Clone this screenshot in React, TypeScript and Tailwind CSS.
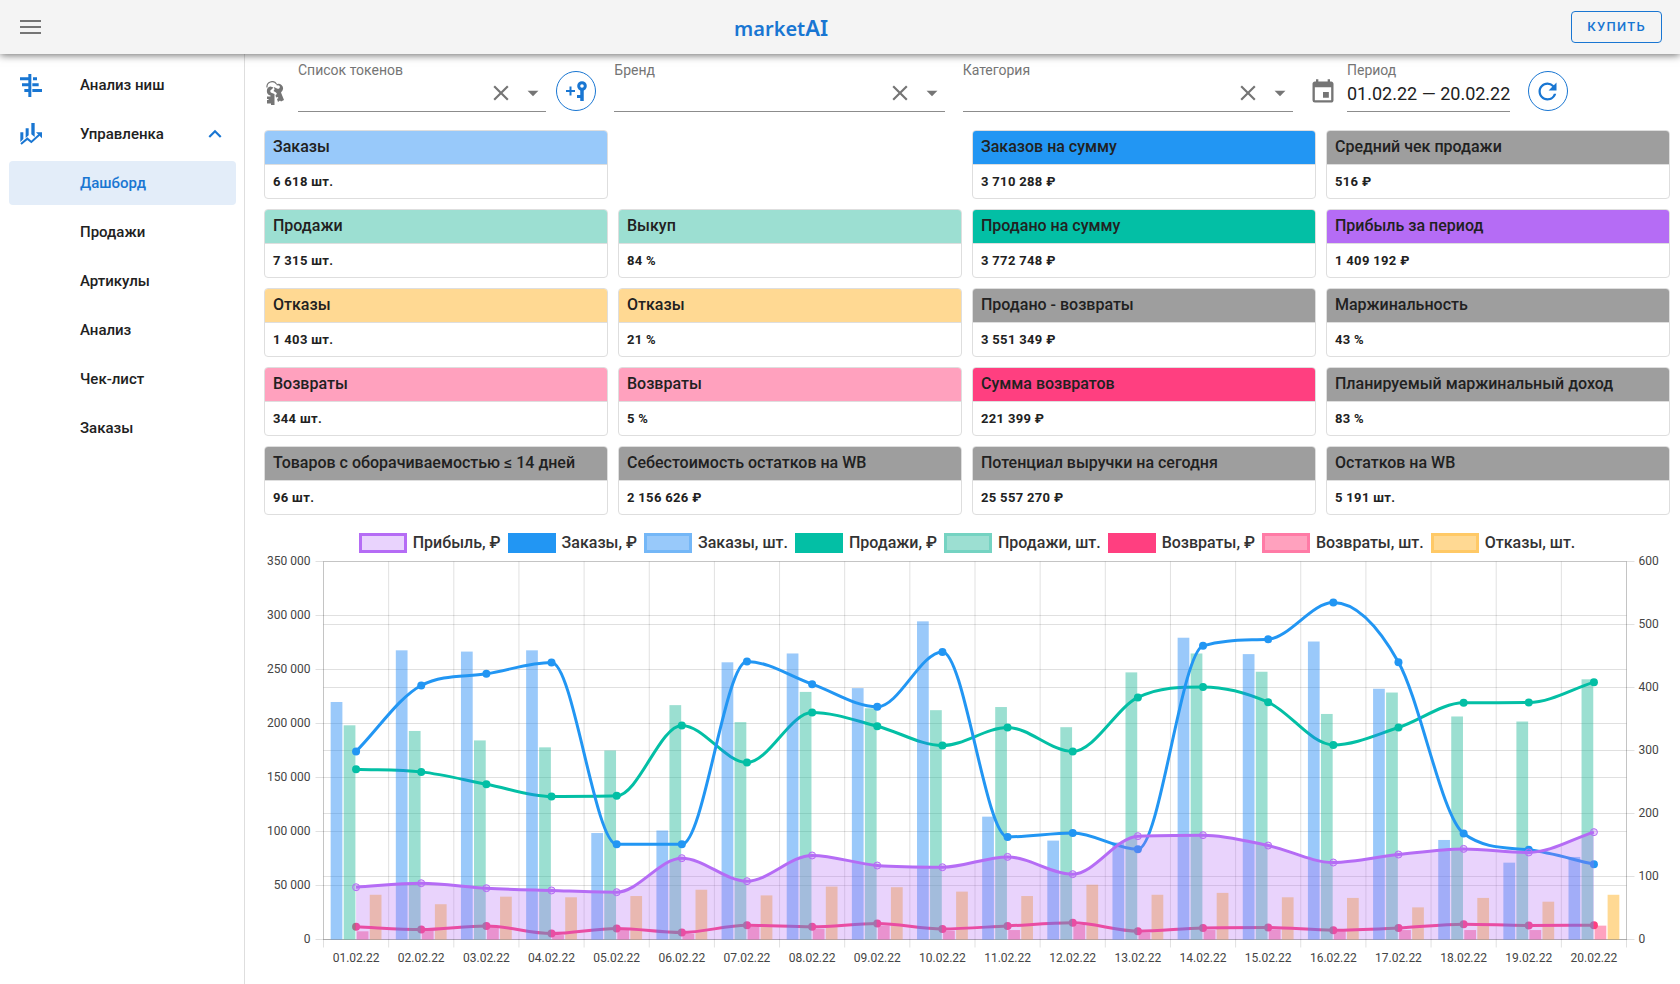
import { useId } from "react";
import { MdArrowDropDown, MdClose, MdEvent, MdExpandLess, MdRefresh } from "react-icons/md";

type Card = { title: string; value: string; color: string } | null;

const cards: Card[] = [
  { title: "Заказы", value: "6 618 шт.", color: "bg-[#98c9fa]" },
  null,
  { title: "Заказов на сумму", value: "3 710 288 ₽", color: "bg-[#2296f3]" },
  { title: "Средний чек продажи", value: "516 ₽", color: "bg-[#9e9e9e]" },
  { title: "Продажи", value: "7 315 шт.", color: "bg-[#9cdfd2]" },
  { title: "Выкуп", value: "84 %", color: "bg-[#9cdfd2]" },
  { title: "Продано на сумму", value: "3 772 748 ₽", color: "bg-[#03bfa5]" },
  { title: "Прибыль за период", value: "1 409 192 ₽", color: "bg-[#b56cf5]" },
  { title: "Отказы", value: "1 403 шт.", color: "bg-[#ffd993]" },
  { title: "Отказы", value: "21 %", color: "bg-[#ffd993]" },
  { title: "Продано - возвраты", value: "3 551 349 ₽", color: "bg-[#9e9e9e]" },
  { title: "Маржинальность", value: "43 %", color: "bg-[#9e9e9e]" },
  { title: "Возвраты", value: "344 шт.", color: "bg-[#ffa1be]" },
  { title: "Возвраты", value: "5 %", color: "bg-[#ffa1be]" },
  { title: "Сумма возвратов", value: "221 399 ₽", color: "bg-[#ff3f80]" },
  { title: "Планируемый маржинальный доход", value: "83 %", color: "bg-[#9e9e9e]" },
  { title: "Товаров с оборачиваемостью ≤ 14 дней", value: "96 шт.", color: "bg-[#9e9e9e]" },
  { title: "Себестоимость остатков на WB", value: "2 156 626 ₽", color: "bg-[#9e9e9e]" },
  { title: "Потенциал выручки на сегодня", value: "25 557 270 ₽", color: "bg-[#9e9e9e]" },
  { title: "Остатков на WB", value: "5 191 шт.", color: "bg-[#9e9e9e]" },
];

const legend = [
  { text: "Прибыль, ₽", box: "bg-[#e9d3fd] border-[#b56cf5]" },
  { text: "Заказы, ₽", box: "bg-[#2296f3] border-[#2296f3]" },
  { text: "Заказы, шт.", box: "bg-[#98c9fa] border-[#74b7f7]" },
  { text: "Продажи, ₽", box: "bg-[#03bfa5] border-[#03bfa5]" },
  { text: "Продажи, шт.", box: "bg-[#9cdfd2] border-[#75d3c2]" },
  { text: "Возвраты, ₽", box: "bg-[#ff3f80] border-[#ff3f80]" },
  { text: "Возвраты, шт.", box: "bg-[#ffa1be] border-[#ff7ba6]" },
  { text: "Отказы, шт.", box: "bg-[#ffd993] border-[#ffc966]" },
];

const subItems = ["Дашборд", "Продажи", "Артикулы", "Анализ", "Чек-лист", "Заказы"];

// money series, left axis
const profit = [48400, 52100, 47500, 45400, 43800, 75300, 54000, 77800, 68500, 66900, 76500, 60500, 95700, 96600, 87000, 71300, 78700, 83900, 80600, 99400];
const ordersSum = [174100, 235200, 246000, 256500, 88200, 88200, 257400, 236400, 215400, 266300, 95000, 98700, 83600, 271900, 278100, 312000, 256800, 98100, 83000, 69700];
const salesSum = [157700, 155200, 143800, 132400, 133000, 198200, 163900, 210200, 197500, 179600, 196300, 174100, 224100, 233900, 219700, 180200, 196300, 219100, 219400, 238300];
const returnsSum = [11700, 9200, 12600, 5500, 10200, 6500, 13200, 11700, 14800, 9800, 12600, 15400, 7700, 10700, 11100, 8600, 10700, 14200, 13000, 13200];
// count series, right axis
const orders = [377, 459, 457, 459, 169, 173, 440, 454, 399, 505, 195, 157, 154, 479, 453, 473, 398, 158, 122, 131];
const sales = [340, 331, 316, 305, 300, 372, 345, 393, 367, 364, 369, 337, 424, 454, 425, 358, 392, 354, 346, 413];
const returns = [13, 15, 21, 7, 16, 9, 20, 17, 22, 14, 15, 23, 11, 15, 16, 13, 15, 15, 15, 22];
const refusals = [71, 56, 68, 67, 69, 79, 70, 84, 83, 76, 69, 87, 71, 74, 67, 66, 51, 66, 60, 71];

const LEFT = 59.5;
const RIGHT = 1362.5;
const TOP = 8.5;
const BOTTOM = 386.5;
const HEIGHT = BOTTOM - TOP;
const STEP = (RIGHT - LEFT) / 20;

const cx = (i: number) => LEFT + STEP * (i + 0.5);
const yMoney = (v: number) => BOTTOM - (v / 350000) * HEIGHT;
const yCount = (v: number) => BOTTOM - (v / 600) * HEIGHT;

const formatNumber = (v: number) => String(v).replace(/\B(?=(\d{3})+$)/g, " ");

// monotone cubic interpolation
function linePath(values: number[]) {
  const ys = values.map(yMoney);
  const n = ys.length;
  const deltas: number[] = [];
  for (let i = 0; i < n - 1; i++) deltas.push((ys[i + 1] - ys[i]) / STEP);
  const m = ys.map((_, i) => {
    if (i === 0) return deltas[0];
    if (i === n - 1) return deltas[n - 2];
    return deltas[i - 1] * deltas[i] <= 0 ? 0 : (deltas[i - 1] + deltas[i]) / 2;
  });
  for (let i = 0; i < n - 1; i++) {
    if (Math.abs(deltas[i]) < 0.0001) {
      m[i] = 0;
      m[i + 1] = 0;
      continue;
    }
    const a = m[i] / deltas[i];
    const b = m[i + 1] / deltas[i];
    const sum = a * a + b * b;
    if (sum > 9) {
      const t = 3 / Math.sqrt(sum);
      m[i] = a * t * deltas[i];
      m[i + 1] = b * t * deltas[i];
    }
  }
  let d = `M${cx(0)},${ys[0]}`;
  for (let i = 0; i < n - 1; i++) {
    const h = STEP / 3;
    d += ` C${cx(i) + h},${ys[i] + m[i] * h} ${cx(i + 1) - h},${ys[i + 1] - m[i + 1] * h} ${cx(i + 1)},${ys[i + 1]}`;
  }
  return d;
}

const Bars = ({ values, slot, color }: { values: number[]; slot: number; color: string }) => {
  const slotWidth = (STEP * 0.8) / 4;
  return (
    <g fill={color} fillOpacity={0.45}>
      {values.map((v, i) => (
        <rect
          key={i}
          x={LEFT + STEP * i + STEP * 0.1 + slotWidth * (slot + 0.05)}
          y={yCount(v)}
          width={slotWidth * 0.9}
          height={BOTTOM - yCount(v)}
        />
      ))}
    </g>
  );
};

const Line = ({ values, color }: { values: number[]; color: string }) => (
  <g>
    <path d={linePath(values)} fill="none" stroke={color} strokeWidth={3} />
    {values.map((v, i) => (
      <circle key={i} cx={cx(i)} cy={yMoney(v)} r={4} fill={color} />
    ))}
  </g>
);

const Chart = () => (
  <svg viewBox="0 0 1406 416" className="block w-full h-auto" role="img" aria-label="Дашборд">
    <g stroke="#000" strokeOpacity={0.12}>
      {Array.from({ length: 8 }, (_, i) => (
        <line key={i} x1={LEFT - 8} x2={RIGHT} y1={yMoney(i * 50000)} y2={yMoney(i * 50000)} />
      ))}
      {Array.from({ length: 7 }, (_, i) => (
        <line key={i} x1={LEFT} x2={RIGHT + 8} y1={yCount(i * 100)} y2={yCount(i * 100)} />
      ))}
      {Array.from({ length: 21 }, (_, i) => (
        <line key={i} x1={LEFT + STEP * i} x2={LEFT + STEP * i} y1={TOP} y2={BOTTOM + 8} />
      ))}
      <path d={`M${LEFT},${TOP}V${BOTTOM}H${RIGHT}V${TOP}`} fill="none" />
    </g>

    <Bars values={refusals} slot={3} color="#ffab11" />
    <Bars values={returns} slot={2} color="#ff3070" />
    <Line values={returnsSum} color="#ff3f80" />
    <Bars values={sales} slot={1} color="#22b799" />
    <Line values={salesSum} color="#03bfa5" />
    <Bars values={orders} slot={0} color="#1f88f3" />
    <Line values={ordersSum} color="#2296f3" />

    <path d={`${linePath(profit)} V${BOTTOM} H${cx(0)} Z`} fill="#b56cf5" fillOpacity={0.3} />
    <path d={linePath(profit)} fill="none" stroke="#b56cf5" strokeWidth={3} />
    {profit.map((v, i) => (
      <circle key={i} cx={cx(i)} cy={yMoney(v)} r={3.5} fill="#b56cf5" fillOpacity={0.3} stroke="#b56cf5" />
    ))}

    <g fontSize={12} fill="#444">
      {Array.from({ length: 8 }, (_, i) => (
        <text key={i} x={LEFT - 13} y={yMoney(i * 50000) + 3.5} textAnchor="end">{formatNumber(i * 50000)}</text>
      ))}
      {Array.from({ length: 7 }, (_, i) => (
        <text key={i} x={RIGHT + 12} y={yCount(i * 100) + 3.5}>{i * 100}</text>
      ))}
      {profit.map((_, i) => (
        <text key={i} x={cx(i)} y={BOTTOM + 22.5} textAnchor="middle">{String(i + 1).padStart(2, "0")}.02.22</text>
      ))}
    </g>
  </svg>
);

const NicheIcon = () => (
  <svg width="22" height="23" viewBox="0 0 66 69" fill="#1976d2">
    <path d="M25 0h9v69h-9zM0 10h27v9H0zM39 10h12v9H39zM6 28h21v9H6zM37 28h19v9H37zM13 45h14v9H13zM37 45h29v9H37z" />
  </svg>
);

const ManageIcon = () => (
  <svg width="22" height="22" viewBox="0 0 66 66" fill="#1976d2">
    <path d="M1 28h9v20L1 57zM17 16h9v21l-9 8zM34 0h10v42l-10-8z" />
    <path d="M3 63l19-16 12 10 24-22" fill="none" stroke="#1976d2" strokeWidth="6" />
    <path d="M48 28h18v18z" />
  </svg>
);

const KeysIcon = () => (
  <svg width="18" height="25" viewBox="0 0 18 25" className="self-end mb-[6px] shrink-0" fill="#757575">
    <path d="M1 6.500A5.200 5.200 0 0 1 10.500 3" fill="none" stroke="#757575" strokeWidth="1.200" />
    {/* front key */}
    <path d="M4.500 5.500L7.500 6.500L5.500 8.500A1.800 1.800 0 0 0 6 12L8.500 13V24H5V22.500H1V19H2.500V18H1V15.500H4.500V14.500A4.600 4.600 0 0 1 4.500 5.500Z" />
    {/* back key */}
    <path d="M8 6L11 7.500A1.800 1.800 0 1 0 11 4.500L10 3.500A4.600 4.600 0 0 1 16.500 9.500L15 11.500L18 19L15 20.500L14 19.500L12 21L11 18L12.500 17L11.500 16L10 16.500L9.500 14L11 13L10 11.500L7.500 10L8.500 8.500Z" />
  </svg>
);

const AddKeyIcon = () => (
  <svg width="21" height="20" viewBox="0 0 21 20" fill="none" stroke="#1976d2">
    <path d="M0 10h9M4.500 5.500v9" strokeWidth="2" />
    <circle cx="16" cy="5" r="3.300" strokeWidth="3" />
    <path d="M16 8v12" strokeWidth="3.500" />
    <path d="M11 15.500h4" strokeWidth="3" />
  </svg>
);

const Field = ({ label }: { label: string }) => {
  const id = useId();
  return (
    <div className="flex-1 min-w-0 h-[50px] border-b border-[#8c8c8c]">
      <label htmlFor={id} className="block text-sm leading-4 text-[#757575]">{label}</label>
      <div className="flex items-center h-[30px]">
        <input id={id} type="text" className="flex-1 min-w-0 outline-none" />
        <button type="button" aria-label="Очистить" className="text-[#757575]"><MdClose size={26} /></button>
        <button type="button" aria-label="Открыть" className="ml-[6px] text-[#757575]"><MdArrowDropDown size={26} /></button>
      </div>
    </div>
  );
};

const Header = () => (
  <header className="relative z-10 flex items-center h-[54px] pl-5 pr-[18px] bg-[#f4f4f4] shadow-[0_1px_8px_rgba(0,0,0,0.6)]">
    <button type="button" aria-label="Меню">
      <svg width="21" height="16" viewBox="0 0 21 16" stroke="#757575" strokeWidth="2">
        <path d="M0 2h21M0 8h21M0 14h21" />
      </svg>
    </button>
    <div className="flex-1 pr-[50px] text-center font-semibold text-[#1976d2] font-['Noto_Sans',sans-serif]">
      <span className="text-xl">market</span><span className="text-[22px]">AI</span>
    </div>
    <button type="button" className="h-8 px-[15px] text-[13px] font-medium tracking-widest text-[#1976d2] border border-[#1976d2] rounded">
      КУПИТЬ
    </button>
  </header>
);

const Sidebar = () => (
  <nav className="w-[245px] shrink-0 pl-[9px] pr-2 pt-[9px] border-r border-[#dedede] text-[15px] font-medium text-[#212121]">
    <a href="#" className="flex items-center h-11 mb-[5px] pl-[11px]">
      <NicheIcon />
      <span className="ml-[38px]">Анализ ниш</span>
    </a>
    <button type="button" className="flex items-center w-full h-11 mb-[5px] pl-[11px] pr-2">
      <ManageIcon />
      <span className="ml-[38px]">Управленка</span>
      <MdExpandLess size={26} className="ml-auto text-[#1976d2]" />
    </button>
    {subItems.map((text, i) => (
      <a
        key={text}
        href="#"
        className={`flex items-center h-11 mb-[5px] pl-[71px] rounded ${i === 0 ? "bg-[#e3edf9] text-[#1976d2]" : ""}`}
      >
        {text}
      </a>
    ))}
  </nav>
);

const App = () => {
  return (
    <div className="min-h-screen flex flex-col bg-white font-[Roboto,sans-serif]">
      <Header />
      <div className="flex flex-1">
        <Sidebar />
        <main className="flex-1 min-w-0 pl-[19px] pr-[10px]">
          <div className="flex items-center pt-2 pr-[102px]">
            <div className="flex flex-[298] items-center min-w-0 pl-[2px]">
              <KeysIcon />
              <div className="flex flex-1 min-w-0 ml-[14px]"><Field label="Список токенов" /></div>
              <button type="button" aria-label="Добавить токен" className="flex items-center self-end justify-center w-10 h-10 mb-px ml-[10px] border border-[#1976d2] rounded-full">
                <AddKeyIcon />
              </button>
            </div>
            <div className="flex flex-[298] min-w-0 ml-[18px]"><Field label="Бренд" /></div>
            <div className="flex flex-[298] min-w-0 ml-[18px]"><Field label="Категория" /></div>
            <MdEvent size={28} className="self-end mb-[6px] ml-4 text-[#757575] shrink-0" />
            <div className="w-[163px] h-[50px] ml-[10px] shrink-0 border-b border-[#8c8c8c]">
              <label htmlFor="period" className="block text-sm leading-4 text-[#757575]">Период</label>
              <input id="period" type="text" defaultValue="01.02.22 — 20.02.22" className="block w-full h-[30px] text-lg text-[#212121] outline-none" />
            </div>
            <button type="button" aria-label="Обновить" className="flex items-center self-end justify-center w-10 h-10 mb-px ml-[18px] shrink-0 border border-[#1976d2] rounded-full text-[#1976d2]">
              <MdRefresh size={27} />
            </button>
          </div>

          <div className="grid grid-cols-4 gap-[10px] mt-[18px]">
            {cards.map((card, i) =>
              card ? (
                <section key={i} className="h-[69px] overflow-hidden border border-[#dedede] rounded text-[#212121]">
                  <h2 className={`h-[33px] pl-2 text-base leading-8 font-medium ${card.color}`}>{card.title}</h2>
                  <p className="h-[34px] pl-2 text-[13px] leading-[34px] font-bold tracking-wide border-t border-[#dedede]">{card.value}</p>
                </section>
              ) : (
                <div key={i} />
              )
            )}
          </div>

          <div className="flex justify-center gap-[7px] mt-[18px] text-base leading-5 font-medium text-[#333]">
            {legend.map((item) => (
              <button type="button" key={item.text} className="flex items-center gap-[6px] whitespace-nowrap">
                <span className={`w-12 h-5 border-3 ${item.box}`} />
                {item.text}
              </button>
            ))}
          </div>
          <Chart />
        </main>
      </div>
    </div>
  );
};

export default App;
